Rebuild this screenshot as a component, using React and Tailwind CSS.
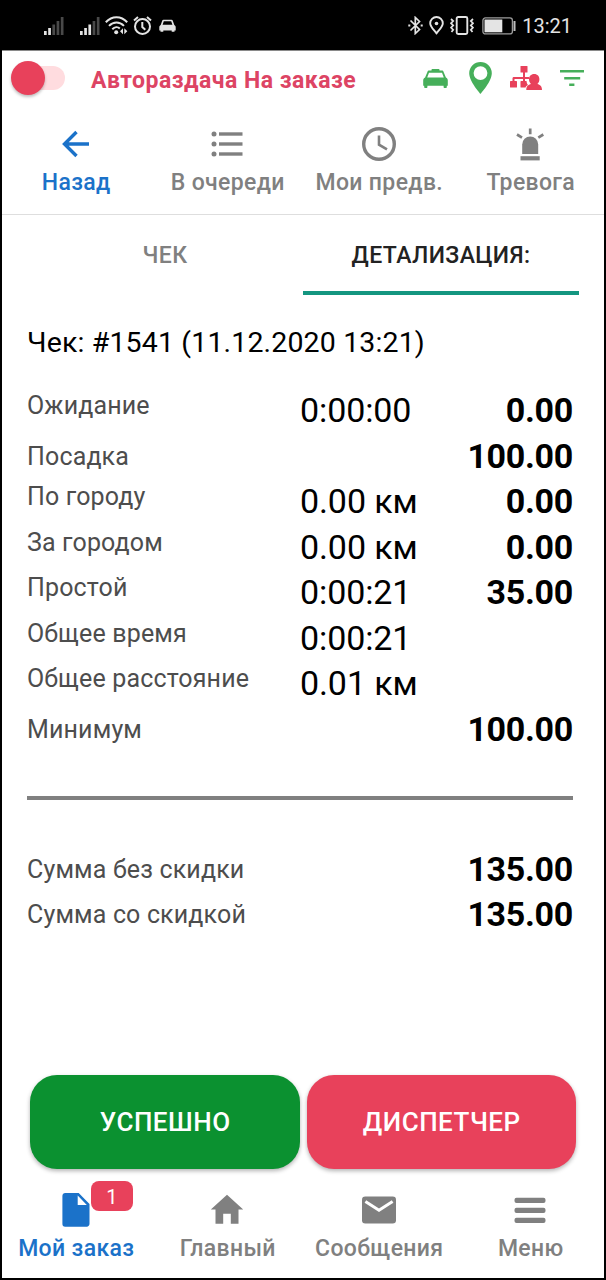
const RECEIPT_ROWS = [
  { label: 'Ожидание', value: '0:00:00', sum: '0.00' },
  { label: 'Посадка', sum: '100.00' },
  { label: 'По городу', value: '0.00 км', sum: '0.00' },
  { label: 'За городом', value: '0.00 км', sum: '0.00' },
  { label: 'Простой', value: '0:00:21', sum: '35.00' },
  { label: 'Общее время', value: '0:00:21' },
  { label: 'Общее расстояние', value: '0.01 км' },
  { label: 'Минимум', sum: '100.00' },
]

const TOTAL_ROWS = [
  { label: 'Сумма без скидки', sum: '135.00' },
  { label: 'Сумма со скидкой', sum: '135.00' },
]

function SignalIcon({ level }) {
  const bars = [4, 7, 10.5, 14, 18]
  return (
    <svg className="h-[18px] w-5" viewBox="0 0 20 18" fill="#e4e4e4">
      {bars.map((h, i) => (
        <rect key={i} x={i * 4.2} y={18 - h} width="2.7" height={h} opacity={i < level ? 1 : 0.32} />
      ))}
    </svg>
  )
}

function WifiIcon() {
  return (
    <svg className="h-[19px] w-[23px]" viewBox="0 0 23 19" fill="none" stroke="#e4e4e4" strokeWidth="2">
      <path d="M.8 6.2C7-.5 16-.5 22.2 6.2M4 9.9c4.5-4.6 10.5-4.6 15 0M7.3 13.2c2.4-2.4 5.5-2.6 7.5-.7" />
      <circle cx="11.2" cy="16.3" r="2" fill="#e4e4e4" stroke="none" />
      <path d="M18 12.2v6l-3-3zM19.3 12.2v6l3-3z" fill="#e4e4e4" stroke="none" />
    </svg>
  )
}

function AlarmIcon() {
  return (
    <svg className="h-[19px] w-[19px]" viewBox="0 0 19 19" fill="none" stroke="#e4e4e4" strokeWidth="2">
      <circle cx="9.5" cy="10.5" r="7.5" />
      <path d="M9.3 6v5l3 2.8M1 4.5L5 1M18 4.5L14 1" />
    </svg>
  )
}

function SmallCarIcon() {
  return (
    <svg className="h-[14px] w-[17px]" viewBox="0 0 17 14" fill="#e4e4e4">
      <path fillRule="evenodd" d="M4.5.8h8c.7 0 1.1.4 1.3 1L15.3 6c.9.5 1.4 1.2 1.4 2.2v3.3h-1.2v1.3h-2.8v-1.3H4.3v1.3H1.5v-1.3H.3V8.2C.3 7.2.8 6.500 1.7 6l1.500-4.2c.2-.6.6-1 1.300-1zM4.8 2.3L3.6 5.7h9.800l-1.200-3.400z" />
    </svg>
  )
}

function BluetoothIcon() {
  return (
    <svg className="h-[19px] w-[15px]" viewBox="0 0 15 19" fill="none" stroke="#e4e4e4" strokeWidth="1.7">
      <path d="M2.5 4.5l9 9-4.2 4V1.5l4.2 4-9 9" />
      <path d="M.3 9.5h2M12.7 9.5h2" strokeWidth="2" />
    </svg>
  )
}

function StatusPinIcon() {
  return (
    <svg className="h-[19px] w-[15px]" viewBox="0 0 15 19" fill="none" stroke="#e4e4e4" strokeWidth="1.9">
      <path d="M7.5 17.3C4.5 13.5 1.2 10.8 1.2 7.3a6.3 6.3 0 0 1 12.6 0c0 3.5-3.3 6.2-6.3 10z" />
      <circle cx="7.5" cy="7.5" r="1.8" fill="#e4e4e4" stroke="none" />
    </svg>
  )
}

function VibrateIcon() {
  return (
    <svg className="h-[19px] w-6" viewBox="0 0 24 19" fill="none" stroke="#e4e4e4" strokeWidth="1.9">
      <rect x="6.7" y="1" width="10.6" height="17" rx="1.5" />
      <path d="M1 3l2.2 2L1 7.2l2.2 2.2L1 11.6l2.2 2.2L1.5 16M23 3l-2.2 2L23 7.2l-2.2 2.2 2.2 2.2-2.2 2.2 1.7 2.2" strokeWidth="1.7" />
    </svg>
  )
}

function BatteryIcon() {
  return (
    <svg className="h-[18px] w-[35px]" viewBox="0 0 35 18">
      <rect x=".9" y=".9" width="29.5" height="16" rx="2.5" fill="none" stroke="#9c9c9c" strokeWidth="1.3" />
      <rect x="2.5" y="2.5" width="17.8" height="12.8" fill="#e4e4e4" />
      <rect x="31.5" y="4" width="2" height="10" fill="#bdbdbd" />
    </svg>
  )
}

function StatusBar() {
  return (
    <div className="flex h-[50px] items-center justify-between bg-black pl-11 pr-[34px] pt-px">
      <div className="flex items-center">
        <SignalIcon level={2} />
        <div className="w-4" />
        <SignalIcon level={3} />
        <div className="w-[5px]" />
        <WifiIcon />
        <div className="w-[5px]" />
        <AlarmIcon />
        <div className="w-[7px]" />
        <SmallCarIcon />
      </div>
      <div className="flex items-center">
        <BluetoothIcon />
        <div className="w-[6px]" />
        <StatusPinIcon />
        <div className="w-[6px]" />
        <VibrateIcon />
        <div className="w-[8px]" />
        <BatteryIcon />
        <div className="w-[5px]" />
        <span className="text-[20px] leading-none text-[#e4e4e4]">13:21</span>
      </div>
    </div>
  )
}

function TaxiIcon() {
  return (
    <svg className="h-[19px] w-[25px]" viewBox="0 0 25 19" fill="#46af5a">
      <path fillRule="evenodd" d="M8.5 1c0-.6.4-1 1-1h6c.6 0 1 .4 1 1v.6h2.3c.9 0 1.5.4 1.8 1.3l2.3 5.6c1.3.6 1.9 1.5 1.9 3v5.2h-1V18c0 .6-.4 1-1 1h-1.200c-.6 0-1-.4-1-1v-1.300H4.400V18c0 .6-.4 1-1 1H2.200c-.6 0-1-.4-1-1v-1.300h-1v-5.200c0-1.500.6-2.400 1.900-3l2.300-5.600c.3-.9.9-1.300 1.800-1.300h2.300zM6 3.800L4.200 8.400h16.600L19 3.800z" />
    </svg>
  )
}

function PinIcon() {
  return (
    <svg className="h-8 w-[23px]" viewBox="0 0 23 32" fill="#46af5a">
      <path fillRule="evenodd" d="M11.5 0A11.3 11.3 0 0 0 .2 11.3C.2 19.5 11.5 32 11.5 32s11.3-12.5 11.3-20.7A11.3 11.3 0 0 0 11.5 0zm0 4.2a6.9 6.9 0 1 1 0 13.8 6.9 6.9 0 0 1 0-13.8z" />
    </svg>
  )
}

function DispatchIcon() {
  return (
    <svg className="h-6 w-8" viewBox="0 0 32 24" fill="#e8415b">
      <rect x="10.5" y="0" width="7" height="6.5" rx=".6" />
      <rect x="0" y="15" width="7" height="6.5" rx=".6" />
      <path d="M10.5 15.6c0-.4.3-.6.6-.6H16.5c.2 2 .7 3 1.500 4-1.200.5-2.200 1.300-2.500 2.500h-4.400c-.3 0-.6-.2-.6-.6z" />
      <path d="M13 6h2v5h4v2H4.5v3h-2v-3.5c0-1 .5-1.500 1.500-1.500h9z" />
      <path d="M13 12h2v4h-2z" />
      <path d="M24.2 8c3.3 0 5.2 2.3 5.2 5.3 0 2-.8 3.7-2 4.8 2.6.7 4.6 2 4.6 5.9H16.3c0-3.9 2-5.2 4.7-5.9-1.200-1.100-2-2.800-2-4.800C19 10.300 20.900 8 24.200 8z" />
    </svg>
  )
}

function FilterIcon() {
  return (
    <svg className="h-4 w-6" viewBox="0 0 24 16" fill="#46af5a">
      <path d="M0 0h24v2.6H0zM4.2 7h16v2.6h-16zM9.2 13.5h5.2V16H9.2z" />
    </svg>
  )
}

function Header() {
  return (
    <div className="flex h-[58px] items-center border-t border-[#8a8a8a] pb-[3px] pl-[11px] pr-[22px]">
      <div className="relative flex h-[34px] w-[54px] items-center">
        <div className="ml-4 h-6 w-[38px] rounded-full bg-[#ffdcdf]" />
        <div className="absolute left-0 top-0 h-[34px] w-[34px] rounded-full bg-[#e8415b] shadow-[0_2px_3px_rgba(0,0,0,0.25)]" />
      </div>
      <h1 className="ml-[26px] whitespace-nowrap pt-1.5 text-[23px] font-bold tracking-[0.48px] text-[#dd4464]">Автораздача На заказе</h1>
      <div className="ml-auto flex items-center">
        <TaxiIcon />
        <div className="w-[21px]" />
        <PinIcon />
        <div className="w-[18px]" />
        <DispatchIcon />
        <div className="w-[18px]" />
        <FilterIcon />
      </div>
    </div>
  )
}

function BackIcon() {
  return (
    <svg className="h-[34px] w-[34px]" viewBox="0 0 34 34" fill="none" stroke="#1b72c9" strokeWidth="3.4">
      <path d="M17.500 5L5.500 17l12 12M5.500 17h24.500" />
    </svg>
  )
}

function ListIcon() {
  return (
    <svg className="h-[34px] w-[34px]" viewBox="0 0 34 34" fill="#808080">
      {[7, 17, 27].map((y) => (
        <g key={y}>
          <circle cx="4" cy={y} r="2.5" />
          <rect x="9" y={y - 1.7} width="23.5" height="3.4" />
        </g>
      ))}
    </svg>
  )
}

function ClockIcon() {
  return (
    <svg className="h-[34px] w-[34px]" viewBox="0 0 34 34" fill="none" stroke="#808080">
      <circle cx="17" cy="17" r="15.3" strokeWidth="3.4" />
      <path d="M17 8.5v9.2l8 4.7" strokeWidth="2.6" />
    </svg>
  )
}

function SirenIcon() {
  return (
    <svg className="h-[34px] w-[34px]" viewBox="0 0 34 34" fill="#808080">
      <path d="M9.2 27V17.5a8 8 0 0 1 16 0V27z" />
      <rect x="7.5" y="29.2" width="19.2" height="4.2" />
      <path d="M17.2 1.5v5.8M4 7.5l5 3.1M30.3 7.5l-5 3.1" stroke="#808080" strokeWidth="2.7" />
    </svg>
  )
}

function DocumentIcon() {
  return (
    <svg className="h-[34px] w-[34px]" viewBox="0 0 34 34" fill="#1b72c9">
      <path fillRule="evenodd" d="M6.2 0h13.500L30.500 11v19.800c0 1.600-1.200 2.900-2.700 2.900H6.200a2.800 2.800 0 0 1-2.800-2.900V2.900C3.400 1.300 4.600 0 6.200 0zm12.500 2.600V12h9.100z" />
    </svg>
  )
}

function HomeIcon() {
  return (
    <svg className="h-[34px] w-[34px]" viewBox="0 0 34 34" fill="#808080">
      <path d="M17 1.7L.8 16.6h4.7v14.1h7.7v-10h7.6v10h7.7V16.6h4.7z" />
    </svg>
  )
}

function MailIcon() {
  return (
    <svg className="h-[34px] w-[34px]" viewBox="0 0 34 34">
      <rect x="0" y="3.5" width="34" height="27" rx="3.3" fill="#808080" />
      <path d="M3.4 8.5L17 17.2l13.6-8.7" fill="none" stroke="#fff" strokeWidth="3" />
    </svg>
  )
}

function MenuIcon() {
  return (
    <svg className="h-[34px] w-[34px]" viewBox="0 0 34 34" fill="#808080">
      {[4.8, 14.8, 24.8].map((y) => (
        <rect key={y} x="1.5" y={y} width="31" height="5.2" rx="2" />
      ))}
    </svg>
  )
}

const TOOLBAR = [
  { label: 'Назад', icon: BackIcon, active: true },
  { label: 'В очереди', icon: ListIcon },
  { label: 'Мои предв.', icon: ClockIcon },
  { label: 'Тревога', icon: SirenIcon },
]

const BOTTOM_NAV = [
  { label: 'Мой заказ', icon: DocumentIcon, active: true, badge: 1 },
  { label: 'Главный', icon: HomeIcon },
  { label: 'Сообщения', icon: MailIcon },
  { label: 'Меню', icon: MenuIcon },
]

function NavButton({ item }) {
  const Icon = item.icon
  return (
    <button className={`flex flex-col items-center ${item.active ? 'text-[#1b72c9]' : 'text-[#808080]'}`}>
      <span className="relative">
        <Icon />
        {item.badge && (
          <span className="absolute -top-3 left-8 flex h-[30px] w-[42px] items-center justify-center rounded-[8px] bg-[#e8415b] pt-px text-[20px] text-white">
            {item.badge}
          </span>
        )}
      </span>
      <span className="mt-2 whitespace-nowrap pl-px text-[23px] font-medium leading-7 tracking-[0.35px]">{item.label}</span>
    </button>
  )
}

function ReceiptRow({ row }) {
  return (
    <div className="flex h-[45.5px]">
      <span className={`w-[273px] whitespace-nowrap text-[25px] leading-[30px] tracking-[0.15px] text-[#4d4d4d] ${row.value ? 'pt-[3px]' : 'pt-[8px]'}`}>
        {row.label}
      </span>
      <span className="text-[34px] leading-[45.5px] tracking-[-0.1px] text-black">{row.value}</span>
      <span className="ml-auto text-[34px] font-bold leading-[45.5px] tracking-[-0.3px] text-black">{row.sum}</span>
    </div>
  )
}

export default function App() {
  return (
    <div className="relative flex h-[1280px] w-[606px] flex-col overflow-hidden bg-white font-['Roboto',sans-serif]">
      <StatusBar />
      <Header />

      <nav className="grid h-[107px] grid-cols-4 border-b border-[#dedede] pt-[19px]">
        {TOOLBAR.map((item) => (
          <NavButton key={item.label} item={item} />
        ))}
      </nav>

      {/* вкладки */}
      <div className="grid h-20 grid-cols-2 px-[27px] text-[23px] font-medium tracking-[0.4px]">
        <button className="border-b-4 border-transparent pt-1.5 text-[#808080]">ЧЕК</button>
        <button className="border-b-4 border-[#149680] pt-1.5 text-[#222222]">ДЕТАЛИЗАЦИЯ:</button>
      </div>

      <div className="flex flex-col pl-[27px] pr-[33px]">
        <h2 className="mt-8 whitespace-nowrap text-[28.5px] leading-8 tracking-[0.15px] text-black">Чек: #1541 (11.12.2020 13:21)</h2>
        <div className="mt-[29px]">
          {RECEIPT_ROWS.map((row) => (
            <ReceiptRow key={row.label} row={row} />
          ))}
        </div>
        <div className="mt-11 h-[3.5px] bg-[#808080]" />
        <div className="mt-[47px]">
          {TOTAL_ROWS.map((row) => (
            <ReceiptRow key={row.label} row={row} />
          ))}
        </div>
      </div>

      <div className="mt-auto grid grid-cols-2 gap-[7px] px-[30px] text-[26px] font-medium tracking-[0.5px] text-white">
        <button className="h-[94px] rounded-[27px] bg-[#0b9130] pl-px shadow-[0_2px_4px_rgba(0,0,0,0.3)]">УСПЕШНО</button>
        <button className="h-[94px] rounded-[27px] bg-[#e8415b] pl-px shadow-[0_2px_4px_rgba(0,0,0,0.3)]">ДИСПЕТЧЕР</button>
      </div>

      <nav className="grid h-[111px] grid-cols-4 pt-6">
        {BOTTOM_NAV.map((item) => (
          <NavButton key={item.label} item={item} />
        ))}
      </nav>

      {/* рамка экрана */}
      <div className="pointer-events-none absolute inset-0 border-2 border-black" />
    </div>
  )
}
